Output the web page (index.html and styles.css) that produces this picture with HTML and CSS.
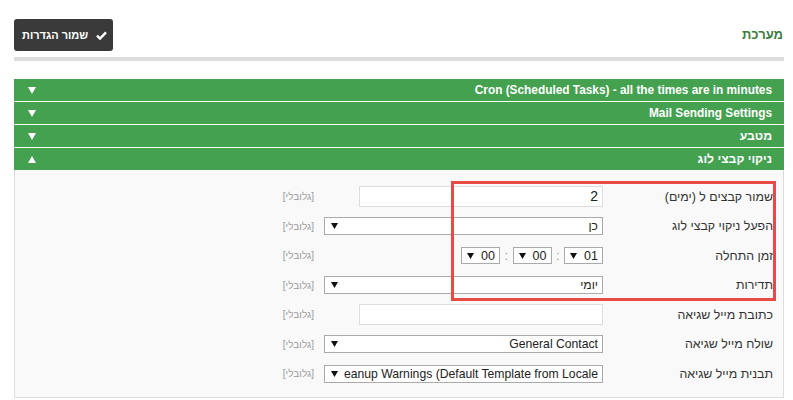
FILE: index.html
```html
<!DOCTYPE html>
<html lang="he" dir="rtl">
<head>
<meta charset="utf-8">
<link rel="stylesheet" href="styles.css">
</head>
<body>
<div class="page">
  <div class="topbar">
    <h1 class="title">מערכת</h1>
    <button class="save-btn" type="button">
      <svg class="check" width="11" height="9" viewBox="0 0 11 9"><path d="M1 4.6 L4 7.6 L10 1.4" fill="none" stroke="#fff" stroke-width="2.4"/></svg>
      <span>שמור הגדרות</span>
    </button>
  </div>
  <div class="divider"></div>

  <div class="sections">
    <div class="bar"><span class="bar-title">Cron (Scheduled Tasks) - all the times are in minutes</span><svg class="tri" width="8" height="7" viewBox="0 0 8 7"><polygon points="0,0 8,0 4,7" fill="#fff"/></svg></div>
    <div class="bar"><span class="bar-title">Mail Sending Settings</span><svg class="tri" width="8" height="7" viewBox="0 0 8 7"><polygon points="0,0 8,0 4,7" fill="#fff"/></svg></div>
    <div class="bar"><span class="bar-title heb">מטבע</span><svg class="tri" width="8" height="7" viewBox="0 0 8 7"><polygon points="0,0 8,0 4,7" fill="#fff"/></svg></div>
    <div class="bar open"><span class="bar-title heb">ניקוי קבצי לוג</span><svg class="tri" width="8" height="7" viewBox="0 0 8 7"><polygon points="0,7 8,7 4,0" fill="#fff"/></svg></div>

    <div class="panel">
      <div class="form">
        <div class="lbl">שמור קבצים ל (ימים)</div>
        <div class="fld"><div class="txt">2</div></div>
        <div class="glob">[גלובלי]</div>

        <div class="lbl">הפעל ניקוי קבצי לוג</div>
        <div class="fld"><div class="sel"><span class="val">כן</span><svg class="arr" width="7" height="6" viewBox="0 0 7 6"><polygon points="0,0 7,0 3.5,6" fill="#111"/></svg></div></div>
        <div class="glob">[גלובלי]</div>

        <div class="lbl">זמן התחלה</div>
        <div class="fld time">
          <div class="sel small"><span class="val">01</span><svg class="arr" width="7" height="6" viewBox="0 0 7 6"><polygon points="0,0 7,0 3.5,6" fill="#111"/></svg></div>
          <span class="colon">:</span>
          <div class="sel small"><span class="val">00</span><svg class="arr" width="7" height="6" viewBox="0 0 7 6"><polygon points="0,0 7,0 3.5,6" fill="#111"/></svg></div>
          <span class="colon">:</span>
          <div class="sel small"><span class="val">00</span><svg class="arr" width="7" height="6" viewBox="0 0 7 6"><polygon points="0,0 7,0 3.5,6" fill="#111"/></svg></div>
        </div>
        <div class="glob">[גלובלי]</div>

        <div class="lbl">תדירות</div>
        <div class="fld"><div class="sel"><span class="val">יומי</span><svg class="arr" width="7" height="6" viewBox="0 0 7 6"><polygon points="0,0 7,0 3.5,6" fill="#111"/></svg></div></div>
        <div class="glob">[גלובלי]</div>

        <div class="lbl">כתובת מייל שגיאה</div>
        <div class="fld"><div class="txt"></div></div>
        <div class="glob">[גלובלי]</div>

        <div class="lbl">שולח מייל שגיאה</div>
        <div class="fld"><div class="sel"><span class="val">General Contact</span><svg class="arr" width="7" height="6" viewBox="0 0 7 6"><polygon points="0,0 7,0 3.5,6" fill="#111"/></svg></div></div>
        <div class="glob">[גלובלי]</div>

        <div class="lbl">תבנית מייל שגיאה</div>
        <div class="fld"><div class="sel"><span class="val">Log Cleanup Warnings (Default Template from Locale<span class="iso">)</span></span><svg class="arr" width="7" height="6" viewBox="0 0 7 6"><polygon points="0,0 7,0 3.5,6" fill="#111"/></svg></div></div>
        <div class="glob">[גלובלי]</div>
      </div>
    </div>
  </div>
</div>
<div class="highlight"></div>
</body>
</html>
```

FILE: styles.css
```css
* { box-sizing: border-box; }
html, body { margin: 0; padding: 0; background: #fff; }
body {
  font-family: "Liberation Sans", Arial, "DejaVu Sans", sans-serif;
  color: #333;
  width: 793px;
  height: 400px;
  overflow: hidden;
}
.page { margin: 0 9px 0 14px; }
.topbar {
  display: flex;
  justify-content: space-between;
  align-items: center;
  padding-top: 19px;
  padding-right: 1px;
}
.title {
  margin: 0;
  font-size: 13px;
  font-weight: bold;
  color: #3e7d3a;
  line-height: 32px;
}
.save-btn {
  display: flex;
  align-items: center;
  gap: 8px;
  height: 32px;
  padding: 0 6px 0 8px;
  border: 0;
  border-radius: 3px;
  background: #3a3a3a;
  color: #fff;
  font-family: inherit;
  font-size: 11px;
  font-weight: bold;
}
.check { display: block; }
.divider { height: 4px; background: #ddd; margin-top: 6px; }
.sections { margin-top: 18px; }
.bar {
  display: flex;
  justify-content: space-between;
  align-items: center;
  height: 22px;
  margin-bottom: 1px;
  padding: 0 12px 0 14px;
  background: #44a14f;
  color: #fff;
  font-size: 11.85px;
  font-weight: bold;
}
.bar-title.heb { font-size: 12.2px; }
.bar.open { margin-bottom: 0; }
.tri { display: block; }
.panel {
  background: #f9f9f9;
  border: 1px solid #ddd;
  border-top: 0;
  height: 228px;
  padding: 12px 10px 0 0;
}
.form {
  display: grid;
  grid-template-columns: 170px 279px auto;
  grid-auto-rows: 29.5px;
  align-items: center;
}
.lbl { font-size: 12.4px; color: #333; white-space: nowrap; }
.fld { display: flex; align-items: center; }
.txt {
  width: 244px;
  height: 21px;
  background: #fff;
  border: 1px solid #ddd;
  font-size: 14px;
  color: #222;
  line-height: 19px;
  padding-right: 4px;
}
.sel {
  display: flex;
  align-items: center;
  width: 279px;
  height: 18px;
  background: #fff;
  border: 1px solid #aaa;
  font-size: 12.2px;
  color: #222;
  padding: 0 4px 0 6px;
}
.val {
  flex: 1;
  min-width: 0;
  overflow: hidden;
  white-space: nowrap;
  line-height: 16px;
}
.iso { unicode-bidi: isolate; }
.arr { display: block; flex: none; margin-right: 6px; }
.sel.small { width: 39px; height: 17px; padding: 0 4px 0 5px; font-size: 12.5px; }
.sel.small .arr { margin-right: 3px; }
.colon { width: 12.5px; text-align: center; color: #999; font-size: 13px; }
.glob { margin-right: 10px; font-size: 10px; color: #999; }
.highlight {
  position: absolute;
  left: 451px;
  top: 181px;
  width: 325px;
  height: 120px;
  border: 3px solid #e84a45;
}
```
